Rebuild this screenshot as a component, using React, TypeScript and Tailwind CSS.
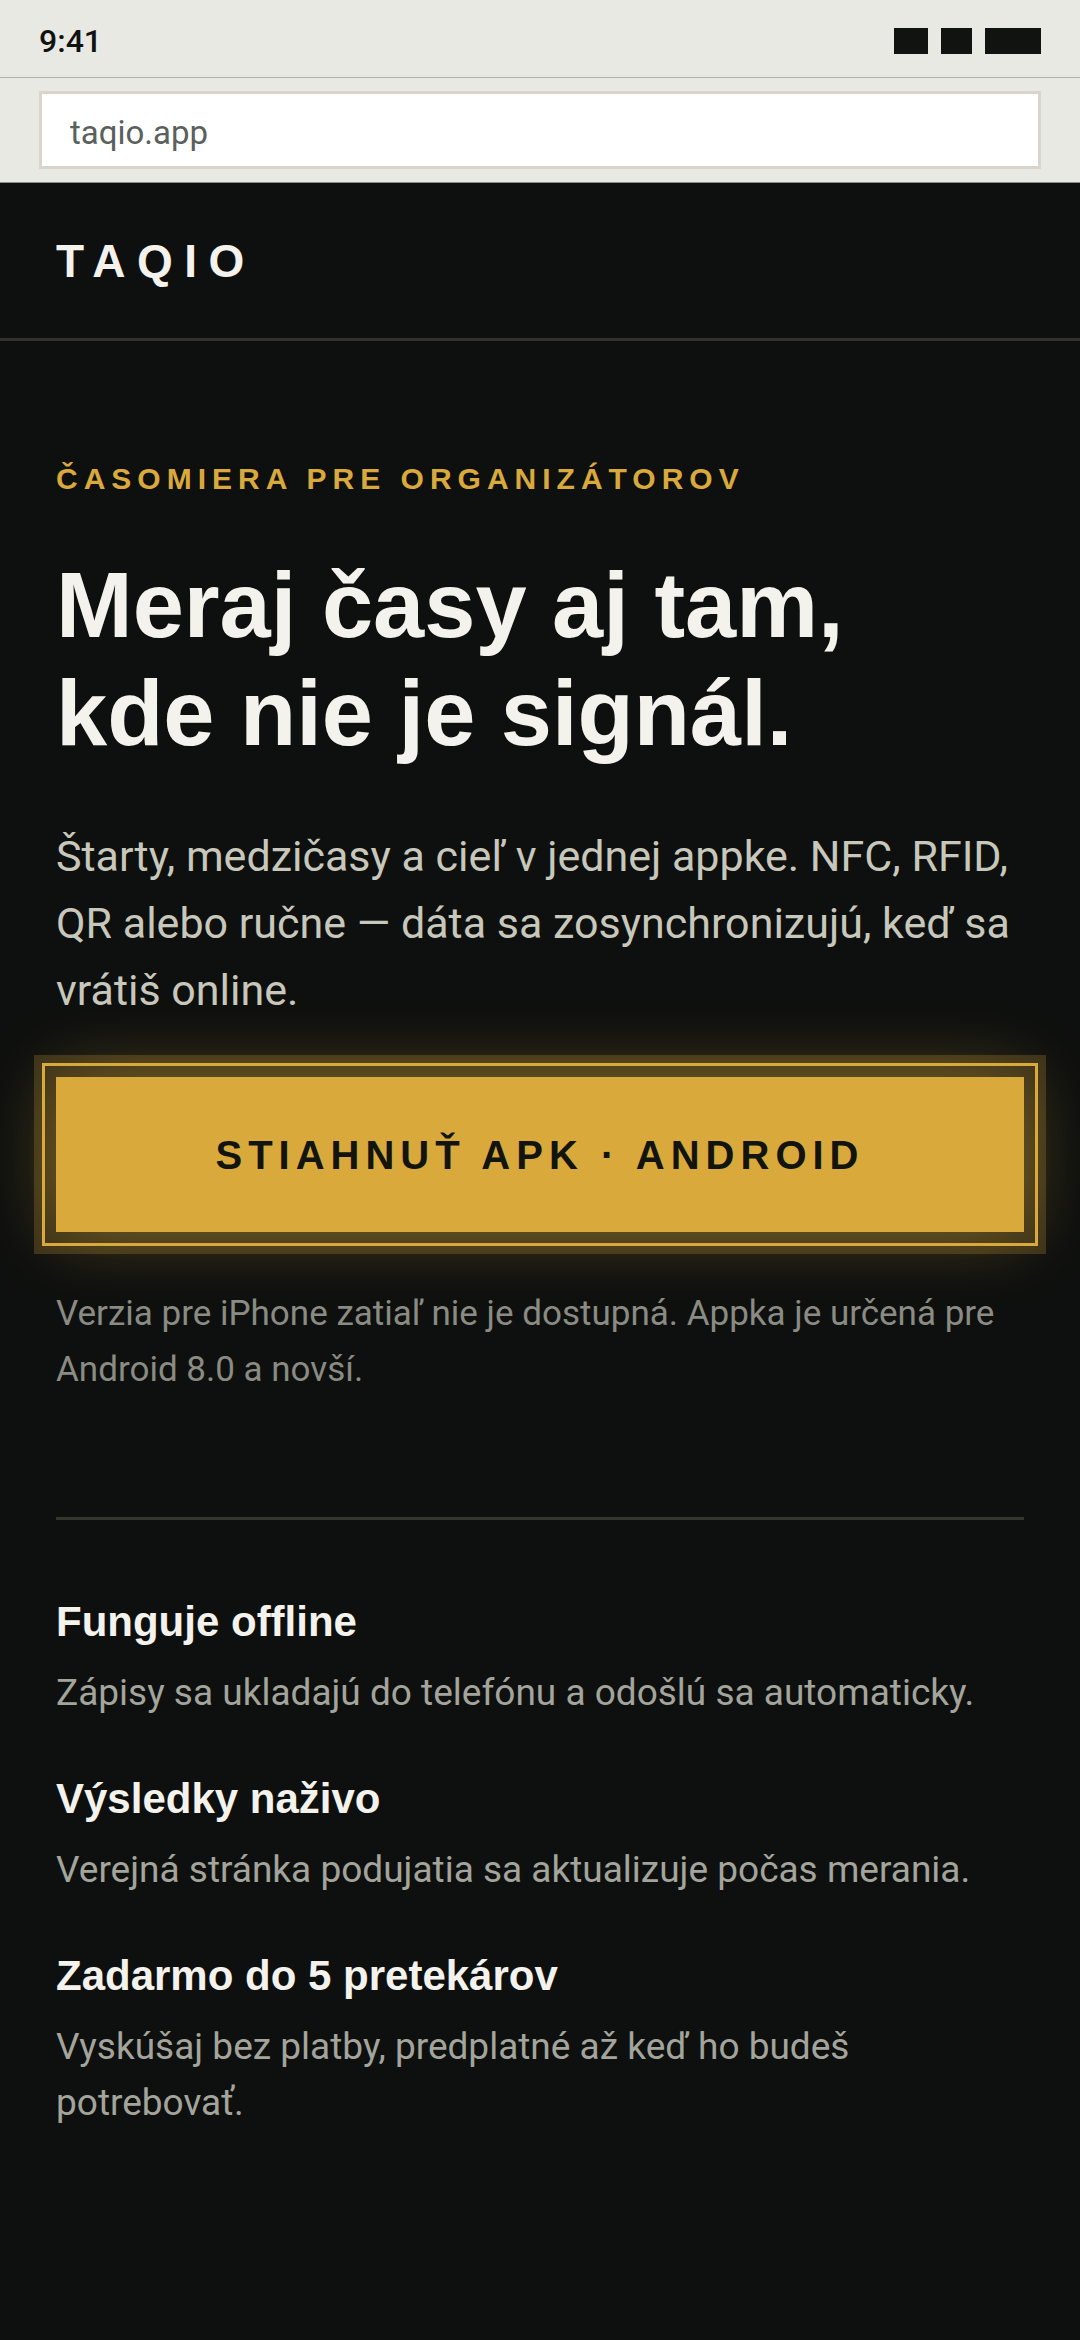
const features = [
  { title: "Funguje offline", text: "Zápisy sa ukladajú do telefónu a odošlú sa automaticky." },
  { title: "Výsledky naživo", text: "Verejná stránka podujatia sa aktualizuje počas merania." },
  { title: "Zadarmo do 5 pretekárov", text: "Vyskúšaj bez platby, predplatné až keď ho budeš potrebovať." },
];

function BrowserChrome() {
  return (
    <div className="bg-[#e8e9e2] font-['Roboto',sans-serif]">
      <div className="flex h-[78px] items-center justify-between border-b border-[#b0b1aa] px-[39px] pt-[4px]">
        <span className="text-[32px] leading-[40px] font-medium text-[#111311]">9:41</span>
        <div className="flex gap-[13px]" aria-hidden="true">
          <span className="h-[26px] w-[34px] bg-[#111311]" />
          <span className="h-[26px] w-[31px] bg-[#111311]" />
          <span className="h-[26px] w-[56px] bg-[#111311]" />
        </div>
      </div>
      <div className="border-b border-[#8c9188] px-[39px] py-[13px]">
        <input
          type="text"
          aria-label="Adresa stránky"
          defaultValue="taqio.app"
          className="block h-[78px] w-full border-3 border-[#dad5cb] bg-white px-[28px] pt-[4px] text-[33px] leading-[40px] text-[#5a605b] outline-none"
        />
      </div>
    </div>
  );
}

export default function App() {
  return (
    <div className="flex min-h-screen flex-col bg-[#0e100f] font-['Roboto',sans-serif]">
      <BrowserChrome />
      <header className="border-b-3 border-[#32322b] px-[56px] pt-[52px] pb-[51px]">
        <a
          href="#"
          className="block font-['Liberation_Sans',sans-serif] text-[46px] leading-[52px] font-bold tracking-[0.25em] text-[#f4f2ec]"
        >
          TAQIO
        </a>
      </header>
      <main className="px-[56px] pb-[120px]">
        <p className="pt-[116px] font-['Liberation_Sans',sans-serif] text-[30px] leading-[44px] font-bold tracking-[0.2em] text-[#d9a93b]">
          ČASOMIERA PRE ORGANIZÁTOROV
        </p>
        <h1 className="mt-[50px] font-['Liberation_Sans',sans-serif] text-[92px] leading-[108px] font-bold text-[#f4f2ec]">
          Meraj časy aj tam,
          <br />
          kde nie je signál.
        </h1>
        <p className="mt-[56px] text-[43px] leading-[67px] text-[#c8c7bb]">
          Štarty, medzičasy a cieľ v jednej appke. NFC, RFID, QR alebo ručne — dáta sa zosynchronizujú, keď sa vrátiš
          online.
        </p>
        <button
          type="button"
          className="mt-[53px] block h-[155px] w-full bg-[#d9a93b] text-center font-['Liberation_Sans',sans-serif] text-[40px] leading-[56px] font-bold tracking-[0.15em] text-[#12140f] shadow-[0_0_0_22px_rgba(217,169,59,0.22),0_0_72px_rgba(217,169,59,0.4)] outline-3 outline-offset-[11px] outline-[#d9a93b]"
        >
          STIAHNUŤ APK · ANDROID
        </button>
        <p className="mt-[54px] text-[35px] leading-[56px] text-[#8a8b82]">
          Verzia pre iPhone zatiaľ nie je dostupná. Appka je určená pre Android 8.0 a novší.
        </p>
        <section className="mt-[119px] flex flex-col gap-[52px] border-t-3 border-[#34352e] pt-[76px]">
          {features.map((feature) => (
            <article key={feature.title}>
              <h2 className="font-['Liberation_Sans',sans-serif] text-[42px] leading-[52px] font-bold text-[#f4f2ec]">
                {feature.title}
              </h2>
              <p className="mt-[17px] text-[37px] leading-[56px] text-[#a3a49b]">{feature.text}</p>
            </article>
          ))}
        </section>
      </main>
    </div>
  );
}
